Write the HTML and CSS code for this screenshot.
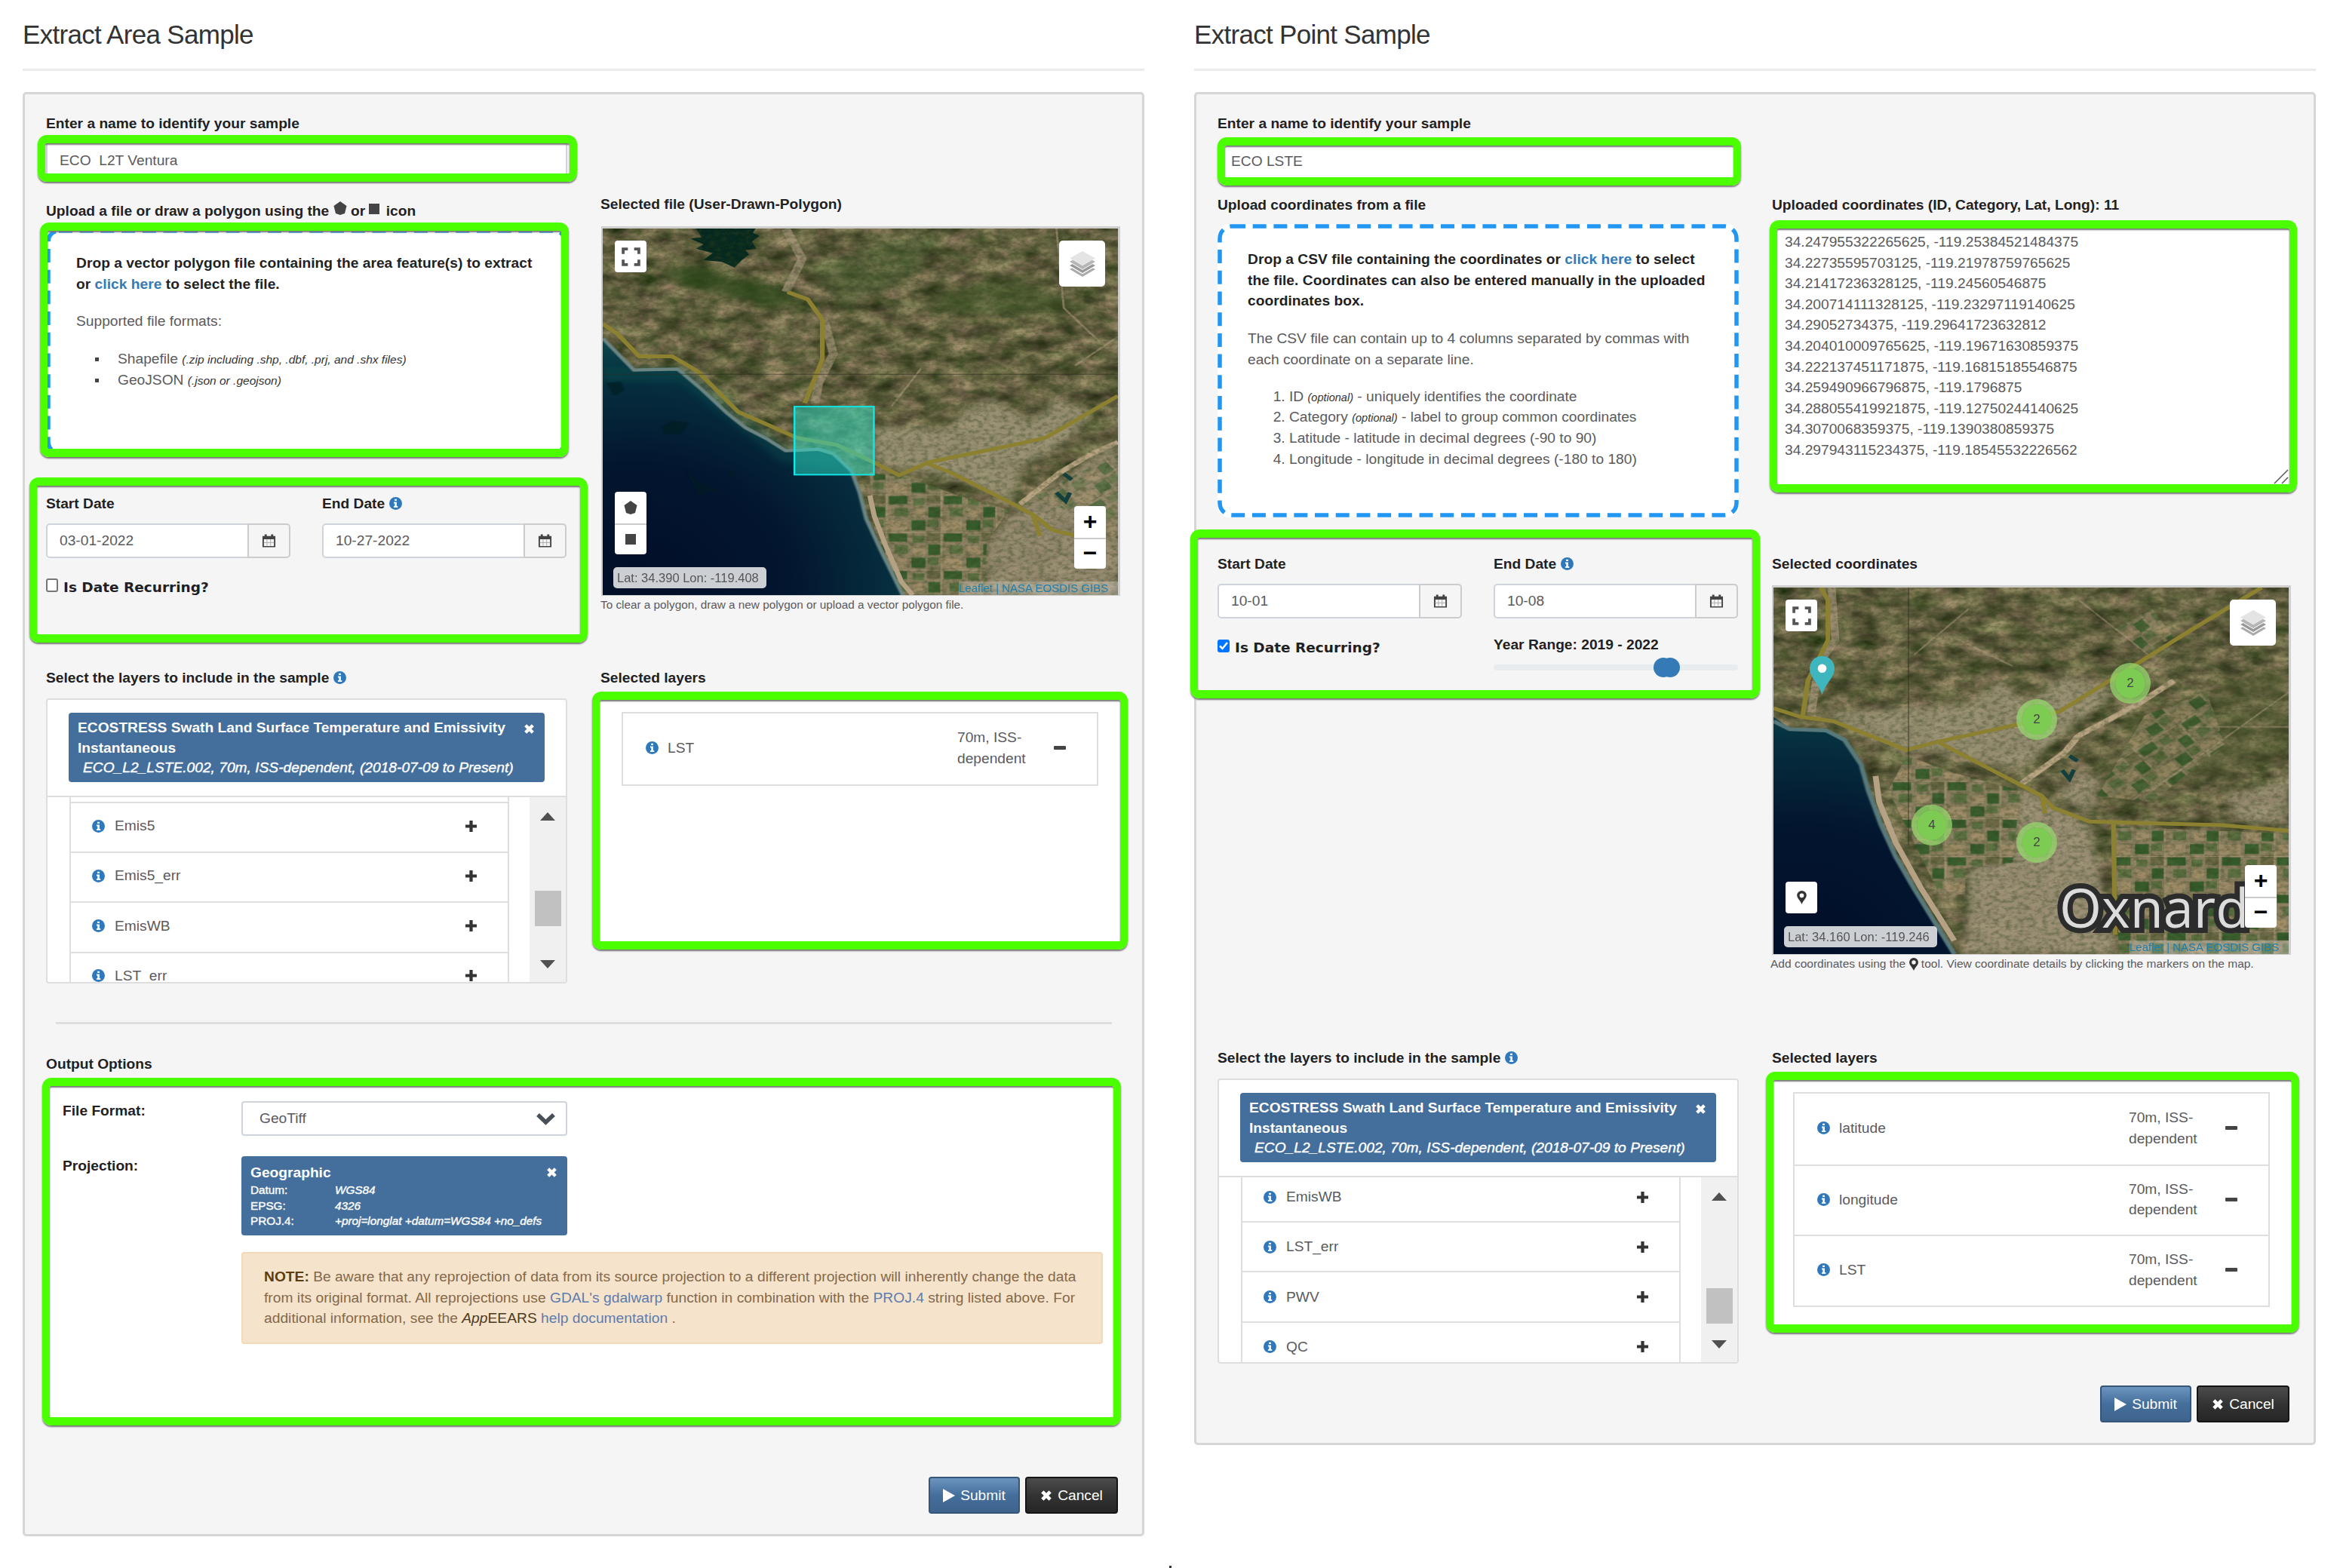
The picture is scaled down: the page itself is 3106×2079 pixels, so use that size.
FILE: index.html
```html
<!DOCTYPE html>
<html lang="en">
<head>
<meta charset="utf-8">
<title>Extract Sample</title>
<link rel="stylesheet" href="styles.css">
</head>
<body>
<svg class="defs" width="0" height="0" aria-hidden="true">
  <defs>
    <symbol id="info" viewBox="0 0 16 16"><circle cx="8" cy="8" r="8" fill="#2f78bc"/><path d="M6.6 2.6h2.8v2.2H6.6zM5.6 6.2h3.8v5.2h1.2v1.8H5.6v-1.8h1.2V8H5.6z" fill="#eef6ff"/></symbol>
    <symbol id="cal" viewBox="0 0 20 20"><path d="M1 3.500h3V1h3v2.500h6V1h3v2.500h3V19H1zM3 8v9.300h14V8z" fill="#444" fill-rule="evenodd"/><path d="M7.300 8v9M12.300 8v9M3 12.500h14" stroke="#aaa" stroke-width="1"/></symbol>
    <symbol id="times" viewBox="0 0 14 14"><path d="M2.500 2.500l9 9M11.500 2.500l-9 9" stroke="currentColor" stroke-width="4"/></symbol>
    <symbol id="plus" viewBox="0 0 16 16"><path d="M8 0v16M0 8h16" stroke="currentColor" stroke-width="4.500"/></symbol>
    <symbol id="full" viewBox="0 0 24 24"><path d="M2 8.500V2h6M16 2h6v6.500M22 15.500V22h-6M8 22H2v-6.500" fill="none" stroke="#555" stroke-width="3.600"/></symbol>
    <symbol id="stack" viewBox="0 0 36 36"><path d="M18 16l17 9-17 10L1 25z" fill="#aaa"/><path d="M18 12l17 9.500-17 10-17-10z" fill="#fff"/><path d="M18 11l17 9-17 10L1 20z" fill="#999"/><path d="M18 7l17 9-17 10L1 16z" fill="#fff"/><path d="M18 6l17 9-17 10L1 15z" fill="#b5b5b5"/><path d="M18 1l17 9.500-17 10-17-10z" fill="#e4e4e4"/></symbol>
    <symbol id="penta" viewBox="0 0 18 18"><path d="M9 0l8.500 6-2.500 10-6 2-6-2L.5 6z" fill="#444"/></symbol>
    <symbol id="pin" viewBox="0 0 14 20"><path d="M7 0a7 7 0 0 1 7 7c0 4-4.500 7-7 13C4.500 14 0 11 0 7a7 7 0 0 1 7-7zm0 3.800a3.200 3.200 0 1 0 0 6.400 3.200 3.200 0 0 0 0-6.400z" fill="#333" fill-rule="evenodd"/></symbol>
    <filter id="terrain" x="0" y="0" width="100%" height="100%" color-interpolation-filters="sRGB">
      <feTurbulence type="fractalNoise" baseFrequency="0.014 0.022" numOctaves="5" seed="8"/>
      <feColorMatrix values=".62 .13 0 0 .03  .52 0 0 0 .13  .45 .1 0 0 -.01  0 0 0 0 1"/>
    </filter>
    <filter id="grain" x="0" y="0" width="100%" height="100%" color-interpolation-filters="sRGB">
      <feTurbulence type="fractalNoise" baseFrequency="0.06 0.08" numOctaves="3" seed="4"/>
      <feColorMatrix values="0 0 0 0 .2  0 0 0 0 .26  0 0 0 0 .12  2.600 0 0 0 -1.050"/>
    </filter>
    <filter id="soft"><feGaussianBlur stdDeviation="12"/></filter>
    <filter id="edge"><feGaussianBlur stdDeviation="2"/></filter>
    <radialGradient id="sea" gradientUnits="userSpaceOnUse" cx="150" cy="1400" r="850"><stop offset="0" stop-color="#020e28"/><stop offset=".5" stop-color="#03162f"/><stop offset=".85" stop-color="#06303f"/><stop offset="1" stop-color="#0b454c"/></radialGradient>
    <pattern id="farm" width="150" height="130" patternUnits="userSpaceOnUse">
      <rect width="150" height="130" fill="#8f8465"/><path d="M4 6h38v34H4zM92 52h50v28H92zM50 90h32v36H50z" fill="#305c29"/><path d="M48 4h30v26H48zM8 60h30v24H8zM108 92h36v30h-36z" fill="#5b7242"/><path d="M88 8h54v34H88zM8 96h34v28H8z" fill="#a8936f"/><path d="M46 44h36v34H46z" fill="#6d6b48"/><path d="M0 48h150M86 0v130" stroke="#b09d7a" stroke-width="3"/>
    </pattern>
    <pattern id="tilted" href="#farm" patternTransform="rotate(-38)"/>
  </defs>
</svg>

<main class="page">
  <section class="sample">
    <h1>Extract Area Sample</h1>
    <form class="panel area">
      <div class="cols top">
        <div class="col">
          <label>Enter a name to identify your sample</label>
          <input class="text name" value="ECO  L2T Ventura">
          <label class="upload-label">Upload a file or draw a polygon using the <svg class="i-penta"><use href="#penta"/></svg> or <span class="sq"></span> icon</label>
          <div class="drop">
            <svg class="dash"><rect x="3" y="3" width="685" height="294" rx="14"/></svg>
            <p class="lead">Drop a vector polygon file containing the area feature(s) to extract<br>or <a>click here</a> to select the file.</p>
            <p>Supported file formats:</p>
            <ul><li>Shapefile <i>(.zip including .shp, .dbf, .prj, and .shx files)</i></li><li>GeoJSON <i>(.json or .geojson)</i></li></ul>
          </div>
          <div class="dates">
            <div><label>Start Date</label><div class="group"><input value="03-01-2022"><span><svg><use href="#cal"/></svg></span></div></div>
            <div><label>End Date <svg class="i-info"><use href="#info"/></svg></label><div class="group"><input value="10-27-2022"><span><svg><use href="#cal"/></svg></span></div></div>
          </div>
          <div class="recur"><span class="check"></span><b>Is Date Recurring?</b></div>
        </div>
        <div class="col side">
          <label>Selected file (User-Drawn-Polygon)</label>
          <div class="map">
            <svg class="ground" viewBox="60 165 1408 1270" preserveAspectRatio="none">
              <rect x="60" y="165" width="1408" height="1270" filter="url(#terrain)"/>
              <g filter="url(#soft)">
                <path d="M230 310L330 290 430 340 540 360 610 420 520 440 400 400 280 370z" fill="#2d4a1c" opacity=".75"/>
                <path d="M620 300L850 200 1000 180 900 330 720 440z" fill="#44602f" opacity=".4"/>
                <path d="M930 390L1200 340 1400 440 1200 470 1000 460z" fill="#3a5226" opacity=".5"/>
                <path d="M800 850L1000 860 1050 800 1110 750 1230 830 1300 760 1400 800 1330 900 1200 1000 1180 1120 1050 1040 900 1000 800 980z" fill="#a09679" opacity=".85"/>
                <path d="M1468 900L1200 1130 1110 1250 1110 1435H1468z" fill="#a0937a" opacity=".8"/>
              </g>
              <path d="M790 1010L900 1030 1030 1090 1170 1140 1110 1250 1100 1435H880L800 1200z" fill="url(#farm)" opacity=".85"/>
              <path d="M1230 1100L1468 940V1250L1330 1140z" fill="url(#tilted)" opacity=".55"/>
              <path d="M315 165l15 30-30 5 35 20-20 15 45 15-25 25 50 5 35 20 20-25 20-20-10-15 30-5-12-25 20-20-18-10 8-15z" fill="#06291f"/>
              <g fill="none" stroke-linejoin="round">
                <path d="M560 165L605 270 560 385M665 480L690 600 650 700 640 770" stroke="#a8977c" stroke-width="24" opacity=".7"/>
                <path d="M1468 905L1390 950 1310 1010 1200 1120" stroke="#b9a584" stroke-width="16"/>
                <path d="M1300 165L1320 440 1420 560M850 780L930 650M1468 540L1350 640" stroke="#a8977c" stroke-width="6" opacity=".6"/>
              </g>
              <rect x="60" y="165" width="1408" height="1270" filter="url(#grain)" opacity=".4"/>
              <path d="M60 540L145 655 265 652 330 722 400 805 450 855 510 895 560 935 650 930 690 945 740 1005 762 1080 780 1170 820 1280 880 1435H60z" fill="url(#sea)"/>
              <path d="M60 670H280L560 950 700 970" fill="none" stroke="#0f5751" stroke-width="50" opacity=".35" filter="url(#soft)"/>
              <path d="M60 545L145 655 265 652 330 722 400 805 450 855 510 895 560 935 650 930 690 945 740 1005 762 1080 780 1170 820 1280 880 1435" fill="none" stroke="#6c8583" stroke-width="11" filter="url(#edge)"/>
              <path d="M70 700l40-5 10 30-30 20zM220 850l30-20 45 8-20 40-50-2zM285 1000l30 40 60 30-50 20zM400 1000l20 10-10 20z" fill="#031c22" opacity=".65" filter="url(#edge)"/>
              <path d="M790 1090l12 70 30 100 45 130 30 45" fill="none" stroke="#b5a184" stroke-width="14"/>
              <g fill="none" stroke="#8b8130" stroke-width="13" stroke-linejoin="round">
                <path d="M60 495L100 530 160 608 250 608 320 660 430 800 520 850 590 890 700 915 800 975 870 1020 950 975 1200 910 1270 890 1468 745"/>
                <path d="M565 385L620 410 660 480 660 620 612 770M950 980L1010 1010 1190 1125 1240 1160 1290 1210 1350 1228M1235 1155L1255 1230"/>
              </g>
              <path d="M1300 1080l25 30 12-30M1320 1015l22 20" stroke="#153f3d" stroke-width="12" fill="none"/>
              <path d="M60 670H1468" stroke="#2b2a20" stroke-width="3" opacity=".6"/>
              <rect x="584" y="782" width="217" height="236" fill="#2ce0c8" fill-opacity=".5" stroke="#0ee8e8" stroke-width="5"/>
            </svg>
            <span class="ctl fs"><svg><use href="#full"/></svg></span>
            <span class="ctl layers"><svg><use href="#stack"/></svg></span>
            <span class="ctl draw two"><span><svg class="i-penta"><use href="#penta"/></svg></span><span><i class="sq"></i></span></span>
            <span class="ctl zoom two"><span>+</span><span>−</span></span>
            <span class="latlon">Lat: 34.390 Lon: -119.408</span>
            <span class="attrib">Leaflet | NASA EOSDIS GIBS</span>
          </div>
          <p class="hint hint-area">To clear a polygon, draw a new polygon or upload a vector polygon file.</p>
        </div>
      </div>

      <div class="cols">
        <div class="col">
          <label>Select the layers to include in the sample <svg class="i-info"><use href="#info"/></svg></label>
          <div class="picker">
            <div class="picked"><div class="chip"><b>ECOSTRESS Swath Land Surface Temperature and Emissivity Instantaneous</b><em>ECO_L2_LSTE.002, 70m, ISS-dependent, (2018-07-09 to Present)</em><svg class="x"><use href="#times"/></svg></div></div>
            <div class="scroll">
              <div class="rows"><div class="tail"></div>
                <div><svg class="i-info"><use href="#info"/></svg>Emis5<svg class="p"><use href="#plus"/></svg></div>
                <div><svg class="i-info"><use href="#info"/></svg>Emis5_err<svg class="p"><use href="#plus"/></svg></div>
                <div><svg class="i-info"><use href="#info"/></svg>EmisWB<svg class="p"><use href="#plus"/></svg></div>
                <div><svg class="i-info"><use href="#info"/></svg>LST_err<svg class="p"><use href="#plus"/></svg></div>
              </div>
              <div class="bar"><i class="up"></i><i class="thumb"></i><i class="down"></i></div>
            </div>
          </div>
        </div>
        <div class="col">
          <label>Selected layers</label>
          <div class="chosen"><div class="table">
            <div><svg class="i-info"><use href="#info"/></svg><span class="n">LST</span><span class="r">70m, ISS-<br>dependent</span><i class="minus"></i></div>
          </div></div>
        </div>
      </div>

      <hr>
      <label>Output Options</label>
      <div class="output">
        <b>File Format:</b>
        <div class="select">GeoTiff<svg viewBox="0 0 27 17"><path d="M3 3l10.500 10L24 3" fill="none" stroke="#495057" stroke-width="5.500"/></svg></div>
        <b>Projection:</b>
        <div class="chip proj"><b>Geographic</b>
          <dl><dt>Datum:</dt><dd>WGS84</dd><dt>EPSG:</dt><dd>4326</dd><dt>PROJ.4:</dt><dd>+proj=longlat +datum=WGS84 +no_defs</dd></dl>
          <svg class="x"><use href="#times"/></svg></div>
        <p class="note"><b>NOTE:</b> Be aware that any reprojection of data from its source projection to a different projection will inherently change the data<br>from its original format. All reprojections use <a>GDAL's gdalwarp</a> function in combination with the <a>PROJ.4</a> string listed above. For<br>additional information, see the <span class="app"><i>App</i>EEARS</span> <a>help documentation</a> .</p>
      </div>
      <div class="actions"><button type="button" class="submit"><i class="play"></i>Submit</button><button type="button" class="cancel"><svg><use href="#times"/></svg>Cancel</button></div>
      <span class="mark a1"></span><span class="mark a2"></span><span class="mark a3"></span><span class="mark a4"></span><span class="mark a5"></span>
    </form>
  </section>

  <section class="sample">
    <h1>Extract Point Sample</h1>
    <form class="panel point">
      <div class="cols top">
        <div class="col">
          <label>Enter a name to identify your sample</label>
          <input class="text name" value="ECO LSTE">
          <label class="upload-label">Upload coordinates from a file</label>
          <div class="drop">
            <svg class="dash"><rect x="3" y="3" width="685" height="383" rx="16"/></svg>
            <p class="lead">Drop a CSV file containing the coordinates or <a>click here</a> to select<br>the file. Coordinates can also be entered manually in the uploaded<br>coordinates box.</p>
            <p>The CSV file can contain up to 4 columns separated by commas with<br>each coordinate on a separate line.</p>
            <ol><li>ID <i>(optional)</i> - uniquely identifies the coordinate</li><li>Category <i>(optional)</i> - label to group common coordinates</li><li>Latitude - latitude in decimal degrees (-90 to 90)</li><li>Longitude - longitude in decimal degrees (-180 to 180)</li></ol>
          </div>
          <div class="dates">
            <div><label>Start Date</label><div class="group"><input value="10-01"><span><svg><use href="#cal"/></svg></span></div></div>
            <div><label>End Date <svg class="i-info"><use href="#info"/></svg></label><div class="group"><input value="10-08"><span><svg><use href="#cal"/></svg></span></div></div>
          </div>
          <div class="dates years">
            <div class="recur"><span class="check on"><svg viewBox="0 0 16 16"><path d="M3 8.500l3.500 3.500L13 4" fill="none" stroke="#fff" stroke-width="2.500"/></svg></span><b>Is Date Recurring?</b></div>
            <div class="range"><label>Year Range: 2019 - 2022</label><div class="track"><i></i><i></i></div></div>
          </div>
        </div>
        <div class="col side">
          <label>Uploaded coordinates (ID, Category, Lat, Long): 11</label>
          <textarea spellcheck="false">34.247955322265625, -119.25384521484375
34.22735595703125, -119.21978759765625
34.21417236328125, -119.24560546875
34.200714111328125, -119.23297119140625
34.29052734375, -119.29641723632812
34.204010009765625, -119.19671630859375
34.222137451171875, -119.16815185546875
34.259490966796875, -119.1796875
34.288055419921875, -119.12750244140625
34.3070068359375, -119.1390380859375
34.297943115234375, -119.18545532226562</textarea>
          <label class="coords-label">Selected coordinates</label>
          <div class="map">
            <svg class="ground" viewBox="66 157 1408 1270" preserveAspectRatio="none">
              <rect x="66" y="157" width="1408" height="1270" filter="url(#terrain)"/>
              <g filter="url(#soft)">
                <path d="M1050 600L1474 420V760L1200 820 950 900z" fill="#566036" opacity=".45"/>
                <path d="M200 590L600 560 680 480 760 560 860 460 1000 520 900 620 740 790 500 720 430 730 250 630z" fill="#a09679" opacity=".85"/>
                <path d="M740 850L930 980 1000 1427H590L600 1130 720 1100z" fill="#a0937a" opacity=".9"/>
                <path d="M900 780L960 820 930 940 840 880zM1300 880L1474 820V980L1330 960z" fill="#a0937a" opacity=".8"/>
              </g>
              <path d="M430 740L560 800 740 860 720 1110 590 1130V1220H520L380 860z" fill="url(#farm)" opacity=".85"/>
              <path d="M1000 985L1474 1010V1427H1010z" fill="url(#farm)" opacity=".85"/>
              <path d="M1000 300L1100 230 1160 330 1080 380zM1080 600L1250 520 1300 700 1100 900 950 880z" fill="url(#tilted)" opacity=".65"/>
              <g fill="none" stroke-linejoin="round">
                <path d="M1160 480L1050 570 900 670 860 730 740 840" stroke="#b9a584" stroke-width="18"/>
                <path d="M225 157L235 340 190 420 170 590" stroke="#a8977c" stroke-width="22" opacity=".7"/>
                <path d="M600 230L450 390M900 200L1100 400M720 430L560 330M1474 520L1100 860M1474 640H1200" stroke="#a8977c" stroke-width="5" opacity=".6"/>
              </g>
              <rect x="66" y="157" width="1408" height="1270" filter="url(#grain)" opacity=".4"/>
              <path d="M66 605L110 645 210 652 260 685 305 770 325 860 360 980 400 1090 450 1200 560 1427H66z" fill="url(#sea)"/>
              <path d="M66 620L110 648 210 652 260 685 305 770 325 860 360 980 400 1090 450 1200 560 1427" fill="none" stroke="#58797a" stroke-width="13" filter="url(#edge)"/>
              <path d="M345 810L355 900 400 1040 470 1200 560 1380" fill="none" stroke="#b5a184" stroke-width="16"/>
              <g fill="none" stroke="#8b8130" stroke-width="13" stroke-linejoin="round">
                <path d="M66 575L140 605 230 620 430 720 520 690 740 630 850 585 1080 405 1200 310 1400 157"/>
                <path d="M520 695L740 840 800 880 830 920 930 968 1130 975 1290 980 1474 1000M195 157L215 200 215 340 160 480 145 610M995 970L1000 1360M800 880L808 940"/>
              </g>
              <path d="M855 790l20 30 12-32M875 740l22 18" stroke="#153f3d" stroke-width="12" fill="none"/>
              <path d="M435 157V1050" stroke="#2b2a20" stroke-width="2.500" opacity=".7"/>
            </svg>
            <span class="city">Oxnard</span>
            <svg class="marker" viewBox="0 0 34 53"><path d="M17 0a17 17 0 0 1 17 17c0 13-12 19-17 36C12 36 0 30 0 17A17 17 0 0 1 17 0z" fill="#3fb5bd"/><circle cx="17" cy="17" r="6" fill="#fff"/></svg>
            <span class="cluster c1">2</span><span class="cluster c2">2</span><span class="cluster c3">4</span><span class="cluster c4">2</span>
            <span class="ctl fs"><svg><use href="#full"/></svg></span>
            <span class="ctl layers"><svg><use href="#stack"/></svg></span>
            <span class="ctl draw"><svg class="i-pin"><use href="#pin"/></svg></span>
            <span class="ctl zoom two"><span>+</span><span>−</span></span>
            <span class="latlon">Lat: 34.160 Lon: -119.246</span>
            <span class="attrib">Leaflet | NASA EOSDIS GIBS</span>
          </div>
          <p class="hint hint-point">Add coordinates using the <svg class="i-pin"><use href="#pin"/></svg> tool. View coordinate details by clicking the markers on the map.</p>
        </div>
      </div>

      <div class="cols">
        <div class="col">
          <label>Select the layers to include in the sample <svg class="i-info"><use href="#info"/></svg></label>
          <div class="picker">
            <div class="picked"><div class="chip"><b>ECOSTRESS Swath Land Surface Temperature and Emissivity Instantaneous</b><em>ECO_L2_LSTE.002, 70m, ISS-dependent, (2018-07-09 to Present)</em><svg class="x"><use href="#times"/></svg></div></div>
            <div class="scroll">
              <div class="rows">
                <div><svg class="i-info"><use href="#info"/></svg>EmisWB<svg class="p"><use href="#plus"/></svg></div>
                <div><svg class="i-info"><use href="#info"/></svg>LST_err<svg class="p"><use href="#plus"/></svg></div>
                <div><svg class="i-info"><use href="#info"/></svg>PWV<svg class="p"><use href="#plus"/></svg></div>
                <div><svg class="i-info"><use href="#info"/></svg>QC<svg class="p"><use href="#plus"/></svg></div>
              </div>
              <div class="bar"><i class="up"></i><i class="thumb"></i><i class="down"></i></div>
            </div>
          </div>
        </div>
        <div class="col">
          <label>Selected layers</label>
          <div class="chosen"><div class="table">
            <div><svg class="i-info"><use href="#info"/></svg><span class="n">latitude</span><span class="r">70m, ISS-<br>dependent</span><i class="minus"></i></div>
            <div><svg class="i-info"><use href="#info"/></svg><span class="n">longitude</span><span class="r">70m, ISS-<br>dependent</span><i class="minus"></i></div>
            <div><svg class="i-info"><use href="#info"/></svg><span class="n">LST</span><span class="r">70m, ISS-<br>dependent</span><i class="minus"></i></div>
          </div></div>
        </div>
      </div>
      <div class="actions"><button type="button" class="submit"><i class="play"></i>Submit</button><button type="button" class="cancel"><svg><use href="#times"/></svg>Cancel</button></div>
      <svg class="grip" viewBox="0 0 20 20"><path d="M1 19L19 1M11 19l8-8" stroke="#555" stroke-width="1.500"/></svg>
      <span class="mark b1"></span><span class="mark b2"></span><span class="mark b3"></span><span class="mark b4"></span>
    </form>
  </section>
</main>
<span class="dot"></span>
</body>
</html>
```
FILE: styles.css
```css
* { box-sizing: border-box; }
body {
  margin: 0;
  height: 2079px;
  position: relative;
  overflow: hidden;
  background: #fff;
  color: #5a5a5e;
  font: 19.2px/27.7px "Liberation Sans", Arial, sans-serif;
}
.defs { position: absolute; }
p, ul, ol, dl, dd { margin: 0; }
b { color: #1f1f24; }
a { color: #337ab7; }
input, textarea, button { font: inherit; color: inherit; }

.page { display: flex; gap: 66px; padding-left: 30px; }
.sample { width: 1487px; flex: none; }
h1 {
  margin: 0 0 28px;
  height: 94px;
  padding-top: 25px;
  border-bottom: 3px solid #ebebeb;
  color: #333;
  font-size: 35px;
  font-weight: 400;
  line-height: 42px;
  letter-spacing: -0.7px;
}

.panel {
  position: relative;
  padding: 25px 26px 27px 28px;
  background: #f5f5f5;
  border: 3px solid #d6d6d6;
  border-radius: 5px;
}
label {
  display: block;
  height: 28px;
  line-height: 28px;
  color: #1f1f24;
  font-weight: 700;
  white-space: nowrap;
}
.cols { display: grid; grid-template-columns: 691px 690px; column-gap: 44px; }
.area .top { height: 735px; }
.point .top { height: 1239px; }
.area .side { padding-top: 107px; }
.point .side { padding-top: 108px; }

.i-info { width: 17px; height: 17px; vertical-align: -2px; }
.i-penta { width: 18px; height: 18px; vertical-align: 1px; }
.sq { display: inline-block; width: 14px; height: 14px; background: #444; vertical-align: 2px; }

.text, .group input {
  display: block;
  width: 100%;
  height: 46px;
  border: 2px solid #ced4da;
  border-radius: 5px;
  background: #fff;
  outline: 0;
}
.name { margin-top: 10px; padding: 4px 16px 0; }
.point .name { margin-top: 12px; height: 48px; padding: 0 16px; }
.upload-label { margin-top: 32px; }
.upload-label .sq { margin-right: 3px; }
.point .upload-label { margin-top: 20px; }

.drop {
  position: relative;
  height: 300px;
  margin-top: 9px;
  padding: 32px 40px;
  background: #fff;
  border-radius: 16px;
}
.dash { position: absolute; left: 0; top: 0; width: 100%; height: 100%; }
.dash rect { fill: none; stroke: #2196f3; stroke-width: 5.500; stroke-dasharray: 18 9.700; }
.point .drop { height: 389px; margin-top: 11px; padding-top: 33px; }
.drop p, .drop li { white-space: nowrap; }
.drop .lead { color: #1f1f24; font-weight: 700; margin-bottom: 22px; letter-spacing: .03px; }
.drop ul, .drop ol { margin-top: 22px; padding-left: 55px; }
.point .drop ol { margin-top: 21px; }
.drop ul { list-style: none; }
.drop ul li::before { content: ""; float: left; width: 5px; height: 5px; margin: 12px 0 0 -30px; background: #444; }
.drop i { font-size: 14.500px; line-height: 1; color: #333; }
.drop ul i { font-size: 15.500px; }

.dates { display: grid; grid-template-columns: 324px 324px; column-gap: 42px; margin-top: 51px; }
.point .dates { margin-top: 48px; }
.group { display: flex; margin-top: 12px; }
.group input { width: 269px; padding: 0 16px; border-radius: 5px 0 0 5px; }
.group span { width: 57px; margin-left: -2px; border: 2px solid #ccc; border-radius: 0 5px 5px 0; display: grid; place-items: center; }
.group svg { width: 19px; height: 20px; }
.recur { display: flex; gap: 7px; align-items: center; height: 28px; margin-top: 24px; }
.recur b { font: 700 18.500px "DejaVu Sans", sans-serif; }
.check { width: 16px; height: 18px; border: 2px solid #777; border-radius: 3px; background: #fff; margin-top: -4px; }
.check.on { height: 17px; border: 0; background: #0075ff; display: grid; }
.point .years { margin-top: 21px; }
.point .recur { margin-top: 3px; }
.track { position: relative; height: 8px; margin-top: 12px; border-radius: 4px; background: #e9ecef; }
.track i { position: absolute; top: -9px; left: 212px; width: 26px; height: 26px; border-radius: 50%; background: #337ab7; }
.track i + i { left: 221px; }

textarea {
  display: block;
  width: 100%;
  height: 350px;
  margin-top: 12px;
  padding: 8px 16px;
  border: 1px solid #ced4da;
  background: #fff;
  line-height: 27.600px;
  resize: none;
  overflow: hidden;
  outline: 0;
}
.coords-label { margin-top: 86px; }

.map { position: relative; width: 688px; height: 490px; margin: 15px 0 0 1px; border: 3px solid #cfcfcf; border-width: 3px 3px 1px 2px; overflow: hidden; }
.point .map { margin: 14px 0 0; }
.ground { display: block; width: 100%; height: 100%; }
.ctl { position: absolute; background: #fff; border-radius: 4px; width: 42px; height: 42px; display: grid; place-items: center; }
.ctl > svg { width: 25px; height: 25px; }
.fs { left: 16px; top: 16px; }
.layers { right: 17px; top: 16px; width: 61px; height: 61px; border-radius: 5px; }
.layers > svg { width: 36px; height: 36px; }
.draw { left: 16px; bottom: 54px; }
.draw > .i-pin { width: 13px; height: 18px; }
.two { height: 83px; grid-template-rows: 1fr 1fr; }
.two > span { width: 100%; height: 100%; display: grid; place-items: center; }
.two > span + span { border-top: 2px solid #ccc; }
.zoom { right: 16px; bottom: 35px; color: #000; font-size: 32px; font-weight: 700; }
.latlon { position: absolute; left: 14px; bottom: 9px; width: 203px; height: 28px; padding-left: 5px; border-radius: 5px; background: rgba(255,255,255,.8); color: #555; font-size: 16.500px; line-height: 28px; white-space: nowrap; }
.attrib { position: absolute; right: 0; bottom: 0; width: 211px; height: 18px; background: rgba(255,255,255,.25); color: #1d7fae; font-size: 15px; line-height: 18px; white-space: nowrap; }
.city { position: absolute; left: 379px; top: 373px; color: #dcdcdc; font: 72px/100px "Open Sans", "Noto Sans", sans-serif; -webkit-text-stroke: 14px #2c2c2c; paint-order: stroke fill; }
.marker { position: absolute; left: 48px; top: 90px; width: 33px; height: 53px; }
.cluster { position: absolute; width: 54px; height: 54px; margin: -29px 0 0 -29px; border: 7px solid rgba(150,215,110,.75); border-radius: 50%; background: #7dcb52; background-clip: padding-box; color: #444; font-size: 17px; line-height: 40px; text-align: center; }
.c1 { left: 475px; top: 129px; }
.c2 { left: 351px; top: 177px; }
.c3 { left: 212px; top: 317px; }
.c4 { left: 351px; top: 340px; }
.hint { margin-top: 2px; height: 20px; line-height: 20px; font-size: 15.300px; white-space: nowrap; }
.hint-point { margin-left: -2px; font-size: 15.500px; }
.hint .i-pin { width: 12px; height: 17px; vertical-align: -4px; }

.picker { height: 378px; margin-top: 13px; border: 2px solid #dedede; border-radius: 4px; background: #fff; display: flex; flex-direction: column; }
.picked { height: 129px; padding: 17px 28px; border-bottom: 2px solid #dedede; }
.chip { position: relative; height: 92px; padding: 6px 36px 0 12px; border-radius: 4px; background: #446e9b; color: #fff; }
.chip b { display: block; width: 600px; color: #fff; line-height: 27px; padding-right: 20px; }
.chip em { display: block; padding-left: 7px; white-space: nowrap; line-height: 26px; -webkit-text-stroke: .4px #fff; }
.chip .x { position: absolute; right: 13px; top: 14px; width: 15px; height: 15px; }
.scroll { flex: 1; min-height: 0; display: flex; justify-content: space-between; overflow: hidden; }
.rows { width: 583px; margin-left: 29px; border: solid #dedede; border-width: 0 2px; }
.rows > div { height: 66.200px; padding: 0 41px 0 28px; border-bottom: 2px solid #dedede; display: flex; align-items: center; }
.rows > div.tail { height: 8px; }
.area .rows > div { padding-bottom: 4px; }
.point .rows { margin-top: -6px; }
.rows .i-info { margin-right: 13px; }
.rows .p { margin-left: auto; width: 15px; height: 15px; color: #333; }
.bar { width: 48px; background: #f0f0f0; display: flex; flex-direction: column; align-items: center; padding: 20px 0 18px; }
.up, .down { border: 10px solid transparent; border-top: 0; border-bottom: 11px solid #505050; }
.down { border-bottom: 0; border-top: 11px solid #505050; margin-top: auto; }
.thumb { width: 35px; height: 47px; margin-top: 93px; background: #c1c1c1; }
.point .thumb { margin-top: 116px; }

.chosen { height: 330px; margin-top: 10px; padding: 21px 30px 0 28px; background: #fff; }
.table { border: 2px solid #dedede; }
.table > div { height: 93.600px; display: flex; align-items: center; padding: 0 0 2px 30px; }
.table > div + div { border-top: 2px solid #dedede; }
.n { width: 370px; padding-left: 12px; }
.r { width: 153px; padding-left: 25px; margin-left: 1px; }
.minus { width: 16px; height: 5px; border-radius: 1px; background: #444; }

hr { margin: 51px 14px 39px 13px; height: 3px; border: 0; background: #dedede; }
.output {
  height: 448px;
  margin: 11px 8px 0 0;
  padding: 24px 18px 0 22px;
  background: #fff;
  display: grid;
  grid-template-columns: 237px 1fr;
  grid-template-rows: 46px 105px 122px;
  row-gap: 27px;
}
.output > b { font-weight: 700; line-height: 27px; margin-top: -1px; }
.select { width: 432px; height: 46px; border: 2px solid #ced4da; border-radius: 4px; display: flex; align-items: center; justify-content: space-between; padding: 0 13px 0 22px; }
.select svg { width: 27px; height: 17px; }
.proj { width: 432px; height: 105px; padding-top: 8px; }
.proj dl { display: grid; grid-template-columns: 112px 1fr; font-size: 15.300px; line-height: 20.500px; -webkit-text-stroke: .4px #fff; white-space: nowrap; }
.proj dd { font-style: italic; }
.note { grid-column: 2; margin-top: -5px; height: 122px; padding: 17px 28px; border: 2px solid #f2d9b8; border-radius: 4px; background: #f6e3cb; color: #83694a; white-space: nowrap; letter-spacing: .03px; }
.note b { color: #5e3d0c; }
.note a { color: #5c7cae; }
.app { color: #4b3a20; }

.actions { display: flex; justify-content: flex-end; gap: 7px; margin: 74px 6px 0 0; }
.point .actions { margin-top: 29px; }
.actions button { height: 49px; width: 121px; padding: 0; border: 2px solid #345678; border-radius: 4px; display: flex; align-items: center; justify-content: center; gap: 7px; color: #fff; background: linear-gradient(#6d94bf, #446e9b 50%, #3e648d); }
.actions .cancel { width: 123px; border-color: #151515; background: linear-gradient(#4c4c4c, #333 50%, #262626); }
.actions svg { width: 16px; height: 16px; }
.play { border: 9px solid transparent; border-left: 16px solid #fff; border-right: 0; }

/* highlight frames laid over the form */
.mark { position: absolute; border: solid #4bff00; border-width: 11px 10px; border-radius: 12px; box-shadow: 0 2px 2px #777, inset 0 2px 2px #777; pointer-events: none; }
.a1 { left: 17px; top: 54px; width: 715px; height: 62px; }
.a2 { left: 20px; top: 170px; width: 701px; height: 311px; }
.a3 { left: 6px; top: 508px; width: 740px; height: 219px; }
.a4 { left: 752px; top: 792px; width: 710px; height: 342px; }
.a5 { left: 23px; top: 1304px; width: 1430px; height: 461px; }
.b1 { left: 28px; top: 57px; width: 694px; height: 64px; }
.b2 { left: 760px; top: 167px; width: 699px; height: 361px; }
.b3 { left: -8px; top: 577px; width: 755px; height: 224px; }
.b4 { left: 755px; top: 1296px; width: 707px; height: 346px; }
.grip { position: absolute; left: 1428px; top: 497px; width: 20px; height: 20px; }
.dot { position: absolute; left: 1550px; top: 2076px; width: 3px; height: 3px; background: #333; }
```
